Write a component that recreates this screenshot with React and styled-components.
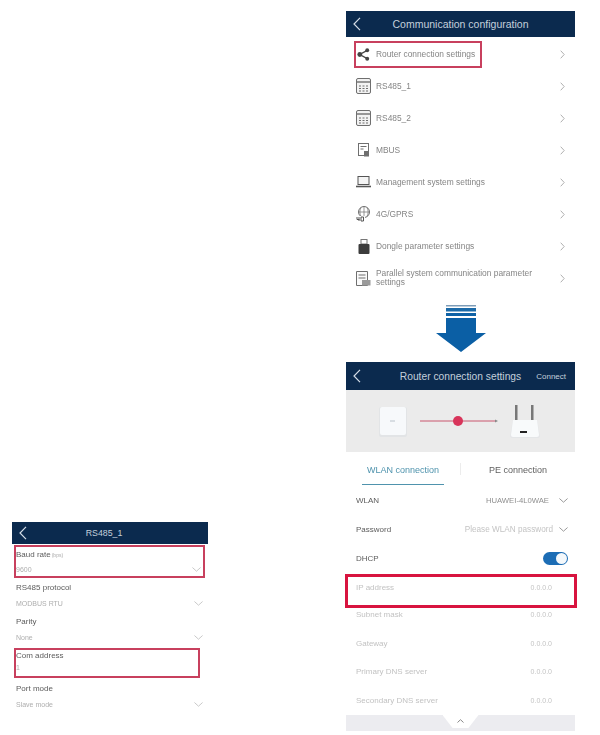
import styled, { createGlobalStyle } from "styled-components";

const GlobalStyle = createGlobalStyle`
  html, body { margin: 0; padding: 0; background: #fff; }
  body { font-family: "Liberation Sans", Arial, sans-serif; }
`;

const menuItems = [
  { key: "router", label: "Router connection settings", selected: true },
  { key: "grid", label: "RS485_1" },
  { key: "grid", label: "RS485_2" },
  { key: "mbus", label: "MBUS" },
  { key: "laptop", label: "Management system settings" },
  { key: "globe", label: "4G/GPRS" },
  { key: "dongle", label: "Dongle parameter settings" },
  { key: "doc", label: "Parallel system communication parameter settings" },
];

const formRows = [
  { label: "Baud rate", unit: "(bps)", value: "9600", chevron: true, mark: "wide" },
  { label: "RS485 protocol", value: "MODBUS RTU", chevron: true },
  { label: "Parity", value: "None", chevron: true },
  { label: "Com address", value: "1", mark: "narrow" },
  { label: "Port mode", value: "Slave mode", chevron: true },
];

const addressRows = [
  { label: "IP address", mark: true },
  { label: "Subnet mask" },
  { label: "Gateway" },
  { label: "Primary DNS server" },
  { label: "Secondary DNS server" },
];

function MenuIcon({ name }) {
  const c = "#6f6f6f";
  if (name === "router") {
    return (
      <svg width="13" height="13" viewBox="0 0 14 14">
        <path d="M12 2 3 7l9 5" fill="none" stroke="#444" strokeWidth="1.4" />
        <circle cx="3" cy="7" r="2.6" fill="#444" />
        <circle cx="11" cy="2.5" r="2.1" fill="#444" />
        <circle cx="11" cy="11.5" r="2.1" fill="#444" />
      </svg>
    );
  }
  if (name === "grid") {
    return (
      <svg width="15" height="16" viewBox="0 0 15 16">
        <rect x="0.5" y="0.5" width="14" height="15" rx="1.5" fill="#f2f2f2" stroke={c} />
        <path d="M1 4h13" stroke={c} strokeWidth="1.4" />
        <path d="M3 8h2M6.5 8h2M10 8h2M3 10.5h2M6.5 10.5h2M10 10.5h2M3 13h2M6.5 13h2M10 13h2" stroke={c} />
      </svg>
    );
  }
  if (name === "mbus") {
    return (
      <svg width="14" height="14" viewBox="0 0 14 14">
        <rect x="1.5" y="0.5" width="10" height="12" fill="#fff" stroke={c} />
        <path d="M3.5 3.5h6M3.5 6h3" stroke={c} />
        <rect x="7" y="8" width="5" height="5.5" fill={c} />
      </svg>
    );
  }
  if (name === "laptop") {
    return (
      <svg width="15" height="12" viewBox="0 0 15 12">
        <rect x="2" y="0.5" width="11" height="8" fill="#f4f4f4" stroke="#555" />
        <path d="M0 10.5h15" stroke="#555" strokeWidth="1.6" />
      </svg>
    );
  }
  if (name === "globe") {
    return (
      <svg width="15" height="16" viewBox="0 0 15 16">
        <circle cx="8" cy="6" r="5.5" fill="none" stroke={c} />
        <path d="M8 .5v11M2.5 6h11M5 1.5c-1.5 3-1.5 6 0 9M11 1.5c1.5 3 1.5 6 0 9" fill="none" stroke={c} strokeWidth="0.7" />
        <rect x="0" y="10" width="9" height="6" fill="#fff" />
        <path d="M1 11v2.5h2.5M3 11v4M5 11h2.5v4H5z" fill="none" stroke="#555" />
      </svg>
    );
  }
  if (name === "dongle") {
    return (
      <svg width="12" height="15" viewBox="0 0 12 15">
        <rect x="3" y="0.5" width="6" height="4.5" fill="#fff" stroke="#777" />
        <rect x="0.5" y="5" width="11" height="10" rx="1" fill="#3c3c3c" />
      </svg>
    );
  }
  return (
    <svg width="15" height="15" viewBox="0 0 15 15">
      <path d="M.5.5h11v14H.5z" fill="#fafafa" stroke={c} />
      <path d="M2.5 4h7M2.5 7h7" stroke={c} />
      <rect x="6" y="9" width="8.5" height="5.5" fill="#9a9a9a" />
    </svg>
  );
}

function RightArrow() {
  return (
    <svg width="5" height="9" viewBox="0 0 5 9">
      <path d="M.7.7 4.2 4.5.7 8.3" fill="none" stroke="#b0b0b0" />
    </svg>
  );
}

function BackArrow() {
  return (
    <svg width="8" height="14" viewBox="0 0 8 14">
      <path d="M7 .8 1 7l6 6.2" fill="none" stroke="#d5dee8" strokeWidth="1.2" />
    </svg>
  );
}

function Down({ color = "#a8a8a8", width = 11 }) {
  return (
    <svg width={width} height="5" viewBox="0 0 11 5" preserveAspectRatio="none">
      <path d="M.5.5 5.5 4.2 10.5.5" fill="none" stroke={color} />
    </svg>
  );
}

function BigArrow() {
  return (
    <svg width="52" height="48" viewBox="0 0 52 48">
      <path d="M11 0h30v1.5H11z" fill="#7c9cb8" />
      <path d="M11 3h30v3.500H11z" fill="#1b6aa8" />
      <path d="M11 8h30v3H11z" fill="#0f62a6" />
      <path d="M11 13h30v15h10L26 47 1 28h10z" fill="#0b5fa5" />
    </svg>
  );
}

function RouterDiagram() {
  return (
    <svg width="229" height="62" viewBox="0 0 229 62">
      <rect x="33" y="17" width="28" height="30" rx="2" fill="#e2e4e6" />
      <rect x="34" y="17" width="26" height="28" rx="2" fill="#f7f9fb" />
      <path d="M44 31h5" stroke="#b9c2ca" />
      <path d="M74 31h76" stroke="#c9566f" />
      <path d="M149 29.5l3 1.5-3 1.500z" fill="#888" />
      <circle cx="112" cy="31" r="5" fill="#d8345a" />
      <rect x="169" y="15" width="2.5" height="15" fill="#777" />
      <rect x="185" y="15" width="2.5" height="15" fill="#777" />
      <path d="M167 30h24l3 16a2 2 0 0 1-2 2h-26a2 2 0 0 1-2-2z" fill="#e4e6e8" />
      <path d="M167 30h24l2 15a2 2 0 0 1-2 2h-24a2 2 0 0 1-2-2z" fill="#f8fafb" />
      <rect x="174" y="41" width="7" height="2" fill="#222" />
    </svg>
  );
}

export default function App() {
  return (
    <Page>
      <GlobalStyle />
      <LeftColumn>
        <Bar $height={22} $shift={12}>
          <BackSlot><BackArrow /></BackSlot>
          <BarTitle $size={8.8}>RS485_1</BarTitle>
        </Bar>
        {formRows.map((row) => (
          <FormRow key={row.label} $mark={row.mark}>
            <FormLabel>
              {row.label}
              {row.unit && <Unit>{row.unit}</Unit>}
            </FormLabel>
            <FormValue>
              <span>{row.value}</span>
              {row.chevron && <Down color="#c4c4c4" width={9} />}
            </FormValue>
          </FormRow>
        ))}
      </LeftColumn>

      <RightColumn>
        <Bar $height={26}>
          <BackSlot><BackArrow /></BackSlot>
          <BarTitle $size={10.5}>Communication configuration</BarTitle>
        </Bar>
        <Menu>
          {menuItems.map((item) => (
            <MenuRow key={item.label}>
              <MenuMain $selected={item.selected}>
                <IconSlot><MenuIcon name={item.key} /></IconSlot>
                <MenuLabel>{item.label}</MenuLabel>
              </MenuMain>
              <RightArrow />
            </MenuRow>
          ))}
        </Menu>
        <ArrowBlock><BigArrow /></ArrowBlock>

        <Bar $height={28}>
          <BackSlot><BackArrow /></BackSlot>
          <BarTitle $size={10.25}>Router connection settings</BarTitle>
          <BarAction>Connect</BarAction>
        </Bar>
        <Diagram><RouterDiagram /></Diagram>
        <Tabs>
          <Tab><TabLabel $active>WLAN connection</TabLabel></Tab>
          <TabDivider />
          <Tab><TabLabel>PE connection</TabLabel></Tab>
        </Tabs>
        <SettingRow>
          <SettingLabel>WLAN</SettingLabel>
          <SettingValue $tone="#8f8f8f" $gap={10} $size={7.7}>HUAWEI-4L0WAE <Down color="#8f8f8f" width={9} /></SettingValue>
        </SettingRow>
        <SettingRow>
          <SettingLabel>Password</SettingLabel>
          <SettingValue $tone="#c4c4c4" $gap={6} $size={8.2}>Please WLAN password <Down color="#8f8f8f" width={9} /></SettingValue>
        </SettingRow>
        <SettingRow>
          <SettingLabel>DHCP</SettingLabel>
          <Toggle><Knob /></Toggle>
        </SettingRow>
        {addressRows.map((row) => (
          <AddressRow key={row.label} $mark={row.mark}>
            <SettingLabel $muted>{row.label}</SettingLabel>
            <SettingValue $tone="#c4c4c4" $size={7}>0.0.0.0</SettingValue>
          </AddressRow>
        ))}
        <BottomBar>
          <Notch>
            <svg width="7" height="4" viewBox="0 0 7 4">
              <path d="M.5 3.5 3.5.7 6.5 3.5" fill="none" stroke="#888" />
            </svg>
          </Notch>
        </BottomBar>
      </RightColumn>
    </Page>
  );
}

const Page = styled.div`
  width: 600px;
  height: 735px;
  overflow: hidden;
  display: flex;
  align-items: flex-start;
  padding-left: 12px;
  box-sizing: border-box;
  filter: blur(0.6px);
`;

const LeftColumn = styled.div`
  width: 196px;
  margin-top: 522px;
  flex-shrink: 0;
`;

const RightColumn = styled.div`
  width: 229px;
  margin: 11px 0 0 138px;
  flex-shrink: 0;
`;

const Bar = styled.div`
  height: ${(p) => p.$height}px;
  background: #0b2a4e;
  display: flex;
  align-items: center;
  justify-content: center;
  padding-right: ${(p) => p.$shift || 0}px;
  position: relative;
`;

const BackSlot = styled.span`
  position: absolute;
  left: 7px;
  top: 50%;
  transform: translateY(-50%);
  display: flex;
`;

const BarTitle = styled.span`
  color: #c4d0dc;
  font-size: ${(p) => p.$size}px;
`;

const BarAction = styled.span`
  position: absolute;
  right: 9px;
  top: 50%;
  transform: translateY(-50%);
  color: #c4d0dc;
  font-size: 8px;
`;

const rowMargins = { wide: "1px 3px 0 2px", narrow: "2px 8px 1px 2px" };
const rowGaps = { wide: 6, narrow: 4 };

const FormRow = styled.div`
  height: ${(p) => (p.$mark === "narrow" ? 30 : p.$mark === "wide" ? 33 : 34)}px;
  box-sizing: border-box;
  display: flex;
  flex-direction: column;
  justify-content: center;
  gap: ${(p) => rowGaps[p.$mark] ?? 8}px;
  padding: ${(p) => (p.$mark === "narrow" ? "0 0 3px 0" : "0 2px 0 0")};
  margin: ${(p) => rowMargins[p.$mark] ?? "0 3px 0 4px"};
  border: ${(p) => (p.$mark ? "2px solid #c8405e" : "none")};
`;

const FormLabel = styled.div`
  color: #5c5c5c;
  font-size: 8px;
  line-height: 9px;
`;

const Unit = styled.span`
  color: #aaa;
  font-size: 5px;
  margin-left: 1px;
`;

const FormValue = styled.div`
  color: #aeaeae;
  font-size: 7px;
  line-height: 8px;
  display: flex;
  justify-content: space-between;
  align-items: center;
`;

const Menu = styled.div`
  margin-top: 1px;
`;

const MenuRow = styled.div`
  height: 32px;
  display: flex;
  align-items: center;
  justify-content: space-between;
  padding-right: 10px;
`;

const MenuMain = styled.div`
  display: flex;
  align-items: center;
  gap: 5px;
  margin-left: ${(p) => (p.$selected ? 8 : 10)}px;
  padding-right: ${(p) => (p.$selected ? 5 : 0)}px;
  height: ${(p) => (p.$selected ? "27px" : "auto")};
  box-sizing: border-box;
  border: ${(p) => (p.$selected ? "2px solid #c8405e" : "none")};
`;

const IconSlot = styled.span`
  width: 15px;
  display: flex;
  justify-content: center;
  flex-shrink: 0;
`;

const MenuLabel = styled.span`
  color: #858585;
  font-size: 8.4px;
  line-height: 9px;
  max-width: 170px;
`;

const ArrowBlock = styled.div`
  height: 68px;
  display: flex;
  justify-content: center;
  padding-top: 11px;
  box-sizing: border-box;
`;

const Diagram = styled.div`
  height: 62px;
  background: #ebebeb;
  display: flex;
`;

const Tabs = styled.div`
  height: 33px;
  display: flex;
  align-items: stretch;
  margin-bottom: 1px;
`;

const Tab = styled.div`
  flex: 1;
  display: flex;
  justify-content: center;
`;

const TabLabel = styled.div`
  width: 82px;
  display: flex;
  align-items: center;
  justify-content: center;
  white-space: nowrap;
  padding-top: 3px;
  font-size: 9px;
  color: ${(p) => (p.$active ? "#4f93ad" : "#5f5f5f")};
  border-bottom: 1px solid ${(p) => (p.$active ? "#4f93ad" : "transparent")};
`;

const TabDivider = styled.div`
  width: 1px;
  background: #ececec;
  margin: 11px 0 10px;
`;

const SettingRow = styled.div`
  height: 29px;
  display: flex;
  align-items: center;
  justify-content: space-between;
  padding: 0 7px 0 10px;
`;

const AddressRow = styled(SettingRow)`
  box-sizing: border-box;
  height: ${(p) => (p.$mark ? "34px" : "28.75px")};
  margin: ${(p) => (p.$mark ? "1px -2px -8px -1px" : "0")};
  padding: ${(p) => (p.$mark ? "0 22px 8px 8px" : "0 23px 0 10px")};
  border: ${(p) => (p.$mark ? "3px solid #d8143f" : "none")};
`;

const SettingLabel = styled.span`
  color: ${(p) => (p.$muted ? "#c2c2c2" : "#5c5c5c")};
  font-size: 8px;
`;

const SettingValue = styled.span`
  color: ${(p) => p.$tone};
  font-size: ${(p) => p.$size}px;
  display: flex;
  align-items: center;
  gap: ${(p) => p.$gap || 0}px;
`;

const Toggle = styled.div`
  width: 25px;
  height: 13px;
  border-radius: 7px;
  background: #1c6db5;
  display: flex;
  justify-content: flex-end;
  align-items: center;
  padding-right: 1px;
  box-sizing: border-box;
`;

const Knob = styled.span`
  width: 11px;
  height: 11px;
  border-radius: 50%;
  background: #f4f8fb;
`;

const BottomBar = styled.div`
  height: 16px;
  background: #ececf0;
  display: flex;
  justify-content: center;
`;

const Notch = styled.div`
  width: 36px;
  height: 13px;
  background: #fff;
  clip-path: polygon(0 0, 100% 0, 72% 100%, 28% 100%);
  display: flex;
  justify-content: center;
  align-items: flex-start;
  padding-top: 4px;
  box-sizing: border-box;
`;
